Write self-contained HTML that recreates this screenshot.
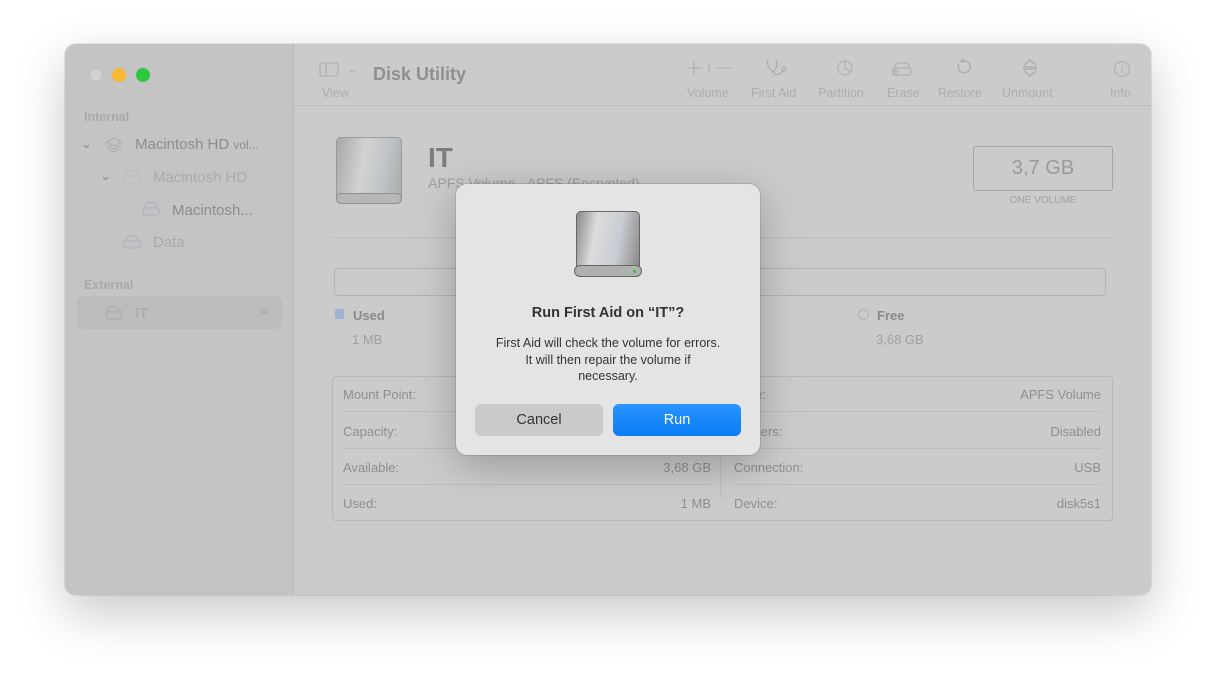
<!DOCTYPE html>
<html><head><meta charset="utf-8"><style>
*{margin:0;padding:0;box-sizing:border-box}
body{width:1216px;height:682px;background:#fff;font-family:"Liberation Sans",sans-serif;position:relative;overflow:hidden}
.win{position:absolute;left:65px;top:44px;width:1086px;height:551px;border-radius:11px;background:#cbcbcb;overflow:hidden;box-shadow:0 18px 50px rgba(0,0,0,.22),0 0 0 1px rgba(0,0,0,.08)}
.side{position:absolute;left:0;top:0;width:229px;height:100%;background:#c4c4c4;border-right:1px solid #b9b9b9}
.a{position:absolute;white-space:nowrap}
.dot{position:absolute;top:24px;width:14px;height:14px;border-radius:50%}
.tb{position:absolute;left:229px;top:0;right:0;height:62px;border-bottom:1px solid #bdbdbd}
.tl{color:#adadad;font-size:12.5px}
.sec{color:#a9a9a9;font-size:12.5px;font-weight:bold}
.row{position:absolute;height:36px;border-bottom:1px solid #bdbdbd;font-size:13px;color:#8f8f8f}
.row span{position:absolute;top:11px}
</style></head><body>
<div class="win">
 <div class="side">
  <div class="dot" style="left:24px;background:#d0d0d0;border:1px solid #bcbcbc"></div>
  <div class="dot" style="left:47px;background:#f7b733"></div>
  <div class="dot" style="left:71px;background:#2ec840"></div>
  <div class="a sec" style="left:19px;top:66px">Internal</div>
  <div class="a" style="left:16px;top:92px;color:#888;font-size:13px">⌄</div>
  <svg class="a" style="left:40px;top:92px" width="18" height="18" viewBox="0 0 18 18" fill="none" stroke="#a9a9a9"><path d="M9 2 16 6 9 10 2 6Z M2 9l7 4 7-4 M2 12l7 4 7-4"/></svg>
  <div class="a" style="left:70px;top:92px;font-size:15px;color:#8d8d8d">Macintosh HD <span style="font-size:12px">vol...</span></div>
  <div class="a" style="left:35px;top:124px;color:#888;font-size:13px">⌄</div>
  <svg class="a" style="left:58px;top:126px" width="18" height="14" viewBox="0 0 18 14" fill="none" stroke="#bcbcbc"><rect x="1" y="6" width="16" height="7" rx="2"/><path d="M2 6 5 1h8l3 5"/></svg>
  <div class="a" style="left:88px;top:125px;font-size:15px;color:#ababab">Macintosh HD</div>
  <svg class="a" style="left:77px;top:158px" width="18" height="14" viewBox="0 0 18 14" fill="none" stroke="#a9b0bc"><rect x="1" y="6" width="16" height="7" rx="2"/><path d="M2 6 5 1h8l3 5"/></svg>
  <div class="a" style="left:107px;top:158px;font-size:15px;color:#8d8d8d">Macintosh...</div>
  <svg class="a" style="left:58px;top:191px" width="18" height="14" viewBox="0 0 18 14" fill="none" stroke="#a9b0bc"><rect x="1" y="6" width="16" height="7" rx="2"/><path d="M2 6 5 1h8l3 5"/></svg>
  <div class="a" style="left:88px;top:190px;font-size:15px;color:#a9a9a9">Data</div>
  <div class="a sec" style="left:19px;top:234px">External</div>
  <div class="a" style="left:12px;top:252px;width:205px;height:33px;border-radius:6px;background:#bcbcbc"></div>
  <svg class="a" style="left:40px;top:262px" width="18" height="14" viewBox="0 0 18 14" fill="none" stroke="#a9a9a9"><rect x="1" y="6" width="16" height="7" rx="2"/><path d="M2 6 5 1h8l3 5"/></svg>
  <div class="a" style="left:70px;top:261px;font-size:15px;color:#a5a5a5">IT</div>
  <div class="a" style="left:195px;top:262px;font-size:10px;color:#b0b0b0">⏏</div>
 </div>
 <div class="tb">
  <svg class="a" style="left:25px;top:18px" width="20" height="16" viewBox="0 0 20 16" fill="none" stroke="#aaa"><rect x="1" y="1" width="18" height="13" rx="2"/><path d="M7 1v13"/></svg>
  <div class="a tl" style="left:53px;top:17px">⌄</div>
  <div class="a tl" style="left:28px;top:42px">View</div>
  <div class="a" style="left:79px;top:20px;font-size:18px;font-weight:bold;color:#8f8f8f">Disk Utility</div>
  <svg class="a" style="left:393px;top:16px" width="45" height="16" fill="none" stroke="#b0b0b0" stroke-width="1.3"><path d="M7 1v14M0 8h14M22 3v10M30 8h14" /></svg>
  <div class="a tl" style="left:393px;top:42px">Volume</div>
  <svg class="a" style="left:472px;top:14px" width="22" height="20" fill="none" stroke="#aaa" stroke-width="1.2"><path d="M2 2q-2 6 5 12q6-6 3-12M7 14q2 4 6 2t4-4"/><circle cx="18" cy="11" r="2"/></svg>
  <div class="a tl" style="left:457px;top:42px">First Aid</div>
  <svg class="a" style="left:542px;top:15px" width="18" height="18" fill="none" stroke="#aaa"><circle cx="9" cy="9" r="7"/><path d="M9 2v7l5 4"/></svg>
  <div class="a tl" style="left:524px;top:42px">Partition</div>
  <svg class="a" style="left:597px;top:17px" width="22" height="16" fill="none" stroke="#aaa"><rect x="2" y="7" width="18" height="7" rx="2"/><path d="M3 7 6 2h10l3 5"/><circle cx="5" cy="11" r="2"/></svg>
  <div class="a tl" style="left:593px;top:42px">Erase</div>
  <svg class="a" style="left:660px;top:14px" width="18" height="18" fill="none" stroke="#aaa" stroke-width="1.3"><path d="M5 6a6 6 0 1 0 4-3M9 0v4l-3-1"/></svg>
  <div class="a tl" style="left:644px;top:42px">Restore</div>
  <svg class="a" style="left:728px;top:15px" width="16" height="18" fill="none" stroke="#aaa" stroke-width="1.2"><path d="M2 6l6-5 6 5M2 12l6 5 6-5M1 8h14M1 10h14"/></svg>
  <div class="a tl" style="left:708px;top:42px">Unmount</div>
  <svg class="a" style="left:819px;top:16px" width="18" height="18" fill="none" stroke="#aaa"><circle cx="9" cy="9" r="7.5"/><path d="M9 8v5M9 5v1"/></svg>
  <div class="a tl" style="left:816px;top:42px">Info</div>
 </div>
 <div class="a" style="left:271px;top:93px;width:66px;height:66px;border-radius:5px;background:linear-gradient(100deg,#a8a8a8,#d2d2d2 40%,#c0c4c8 70%,#aaa);border:1px solid #999"></div>
 <div class="a" style="left:271px;top:149px;width:66px;height:11px;border-radius:6px;background:#b7b7b7;border:1px solid #8f8f8f"></div>
 <div class="a" style="left:363px;top:98px;font-size:28px;font-weight:bold;color:#7e7e7e">IT</div>
 <div class="a" style="left:363px;top:131px;font-size:14px;color:#9d9d9d">APFS Volume · APFS (Encrypted)</div>
 <div class="a" style="left:908px;top:102px;width:140px;height:45px;border:1px solid #a5a5a5;border-radius:3px;text-align:center;line-height:43px;font-size:20px;color:#9a9a9a">3,7 GB</div>
 <div class="a" style="left:908px;top:151px;width:140px;text-align:center;font-size:10px;color:#a3a3a3">ONE VOLUME</div>
 <div class="a" style="left:267px;top:193px;width:780px;height:1px;background:#bdbdbd"></div>
 <div class="a" style="left:269px;top:224px;width:772px;height:28px;border:1px solid #b3b3b3;border-radius:4px"></div>
 <div class="a" style="left:270px;top:265px;width:9px;height:10px;background:#9fb4d4;border-radius:2px"></div>
 <div class="a" style="left:288px;top:264px;font-size:13px;font-weight:bold;color:#8a8a8a">Used</div>
 <div class="a" style="left:287px;top:288px;font-size:13px;color:#a0a0a0">1 MB</div>
 <div class="a" style="left:793px;top:265px;width:11px;height:11px;border:1px solid #b0b0b0;border-radius:50%"></div>
 <div class="a" style="left:812px;top:264px;font-size:13px;font-weight:bold;color:#8a8a8a">Free</div>
 <div class="a" style="left:811px;top:288px;font-size:13px;color:#a0a0a0">3,68 GB</div>
 <div class="a" style="left:267px;top:332px;width:781px;height:145px;border:1px solid #b7b7b7;border-radius:4px"></div>
 <div class="a" style="left:655px;top:333px;width:1px;height:120px;background:#bdbdbd"></div>
 <div class="row" style="left:278px;top:332px;width:368px"><span style="left:0">Mount Point:</span></div>
 <div class="row" style="left:278px;top:369px;width:368px"><span style="left:0">Capacity:</span></div>
 <div class="row" style="left:278px;top:405px;width:368px"><span style="left:0">Available:</span><span style="right:0">3,68 GB</span></div>
 <div class="row" style="left:278px;top:441px;width:368px;border:none"><span style="left:0">Used:</span><span style="right:0">1 MB</span></div>
 <div class="row" style="left:669px;top:332px;width:367px"><span style="left:0">Type:</span><span style="right:0">APFS Volume</span></div>
 <div class="row" style="left:669px;top:369px;width:367px"><span style="left:0">Owners:</span><span style="right:0">Disabled</span></div>
 <div class="row" style="left:669px;top:405px;width:367px"><span style="left:0">Connection:</span><span style="right:0">USB</span></div>
 <div class="row" style="left:669px;top:441px;width:367px;border:none"><span style="left:0">Device:</span><span style="right:0">disk5s1</span></div>
</div>
<div class="a" style="left:456px;top:184px;width:304px;height:271px;background:#e4e4e4;border-radius:11px;box-shadow:0 10px 40px rgba(0,0,0,.25),0 0 0 1px rgba(0,0,0,.1)">
 <div class="a" style="left:120px;top:27px;width:64px;height:60px;border-radius:5px;background:linear-gradient(100deg,#8a8a8a,#dcdcdc 30%,#c8ccd2 65%,#888);border:1px solid #666"></div>
 <div class="a" style="left:118px;top:81px;width:68px;height:12px;border-radius:6px;background:#b0b0b0;border:1px solid #666"></div>
 <div class="a" style="left:177px;top:86px;width:3px;height:3px;background:#2c2;border-radius:50%"></div>
 <div class="a" style="left:0;top:121px;width:304px;text-align:center;font-size:14.5px;font-weight:bold;color:#333">Run First Aid on “IT”?</div>
 <div class="a" style="left:0;top:151px;width:304px;text-align:center;font-size:12.5px;line-height:16.5px;color:#333;white-space:normal">First Aid will check the volume for errors.<br>It will then repair the volume if<br>necessary.</div>
 <div class="a" style="left:19px;top:220px;width:128px;height:32px;border-radius:6px;background:#cacaca;text-align:center;line-height:32px;font-size:14.5px;color:#333">Cancel</div>
 <div class="a" style="left:157px;top:220px;width:128px;height:32px;border-radius:6px;background:linear-gradient(#2a93ff,#0a7cf5);text-align:center;line-height:32px;font-size:14.5px;color:#fff">Run</div>
</div>
</body></html>
